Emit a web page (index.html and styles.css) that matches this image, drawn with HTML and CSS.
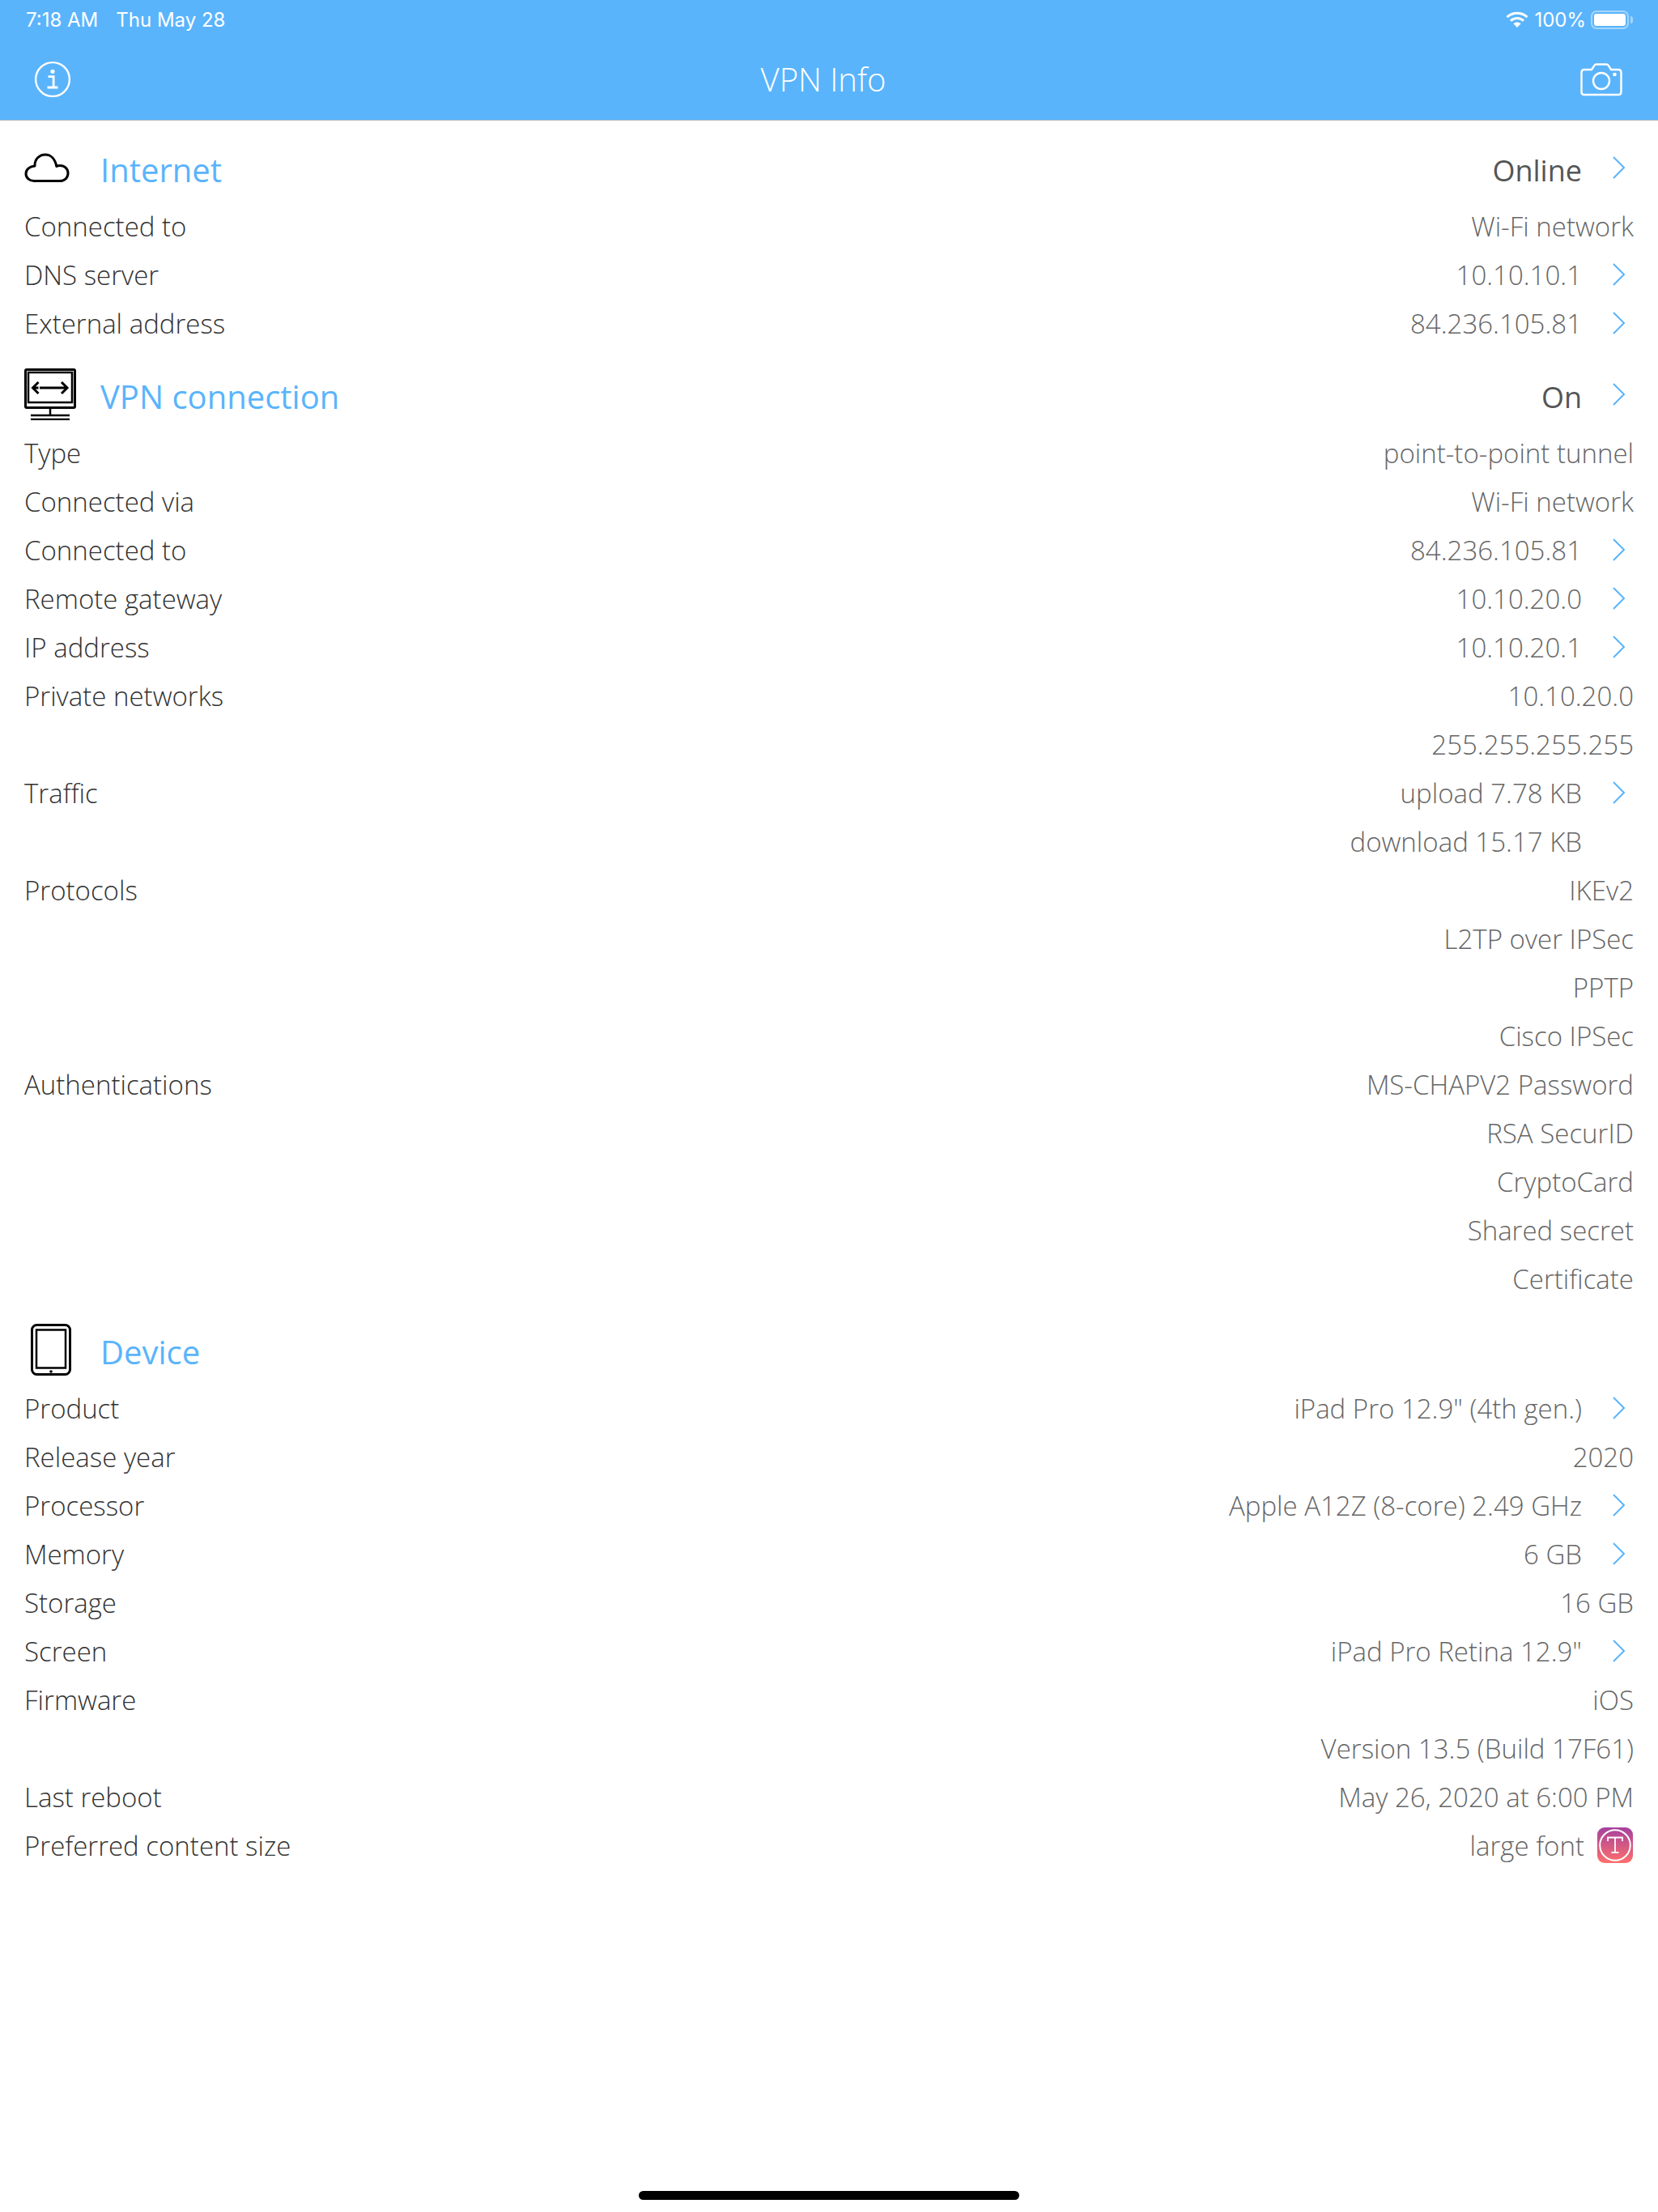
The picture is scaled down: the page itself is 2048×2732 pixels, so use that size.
FILE: index.html
```html
<!DOCTYPE html>
<html lang="en">
<head>
<meta charset="utf-8">
<title>VPN Info</title>
<link rel="stylesheet" href="styles.css">
</head>
<body>
<header class="top">
  <div class="status">
    <div class="status-left"><span>7:18 AM</span><span>Thu May 28</span></div>
    <div class="status-right">
      <svg class="wifi" viewBox="0 0 28 20" width="28" height="20"><path d="M1.5 7.2C8.6 .6 19.4 .6 26.5 7.2" fill="none" stroke="#fff" stroke-width="3"/><path d="M6 11.6C10.6 7.4 17.4 7.4 22 11.6" fill="none" stroke="#fff" stroke-width="3"/><path d="M14 20l-4.6-4.8c2.6-2.2 6.6-2.2 9.2 0z" fill="#fff"/></svg>
      <span class="pct">100%</span>
      <span class="battery"><span class="battery-fill"></span></span>
      <span class="battery-tip"></span>
    </div>
  </div>
  <div class="nav">
    <svg class="nav-icon" viewBox="0 0 46 46" width="46" height="46"><circle cx="23" cy="23" r="20.9" fill="none" stroke="#fff" stroke-width="2.4"/><circle cx="23" cy="13.3" r="2.6" fill="#fff"/><path d="M17.5 19.6h6.6v13M16.5 33h13" fill="none" stroke="#fff" stroke-width="2.8"/></svg>
    <div class="nav-title">VPN Info</div>
    <svg class="nav-icon" viewBox="0 0 52 42" width="52" height="42"><path d="M5 9h9l3.4-5.2c.5-.8 1.200-1.300 2.200-1.300h13c1 0 1.700.5 2.200 1.300L38 9h9c2 0 3.500 1.500 3.500 3.500v24c0 2-1.500 3.500-3.500 3.500H5c-2 0-3.500-1.500-3.500-3.500v-24C1.500 10.500 3 9 5 9z" fill="none" stroke="#fff" stroke-width="2.4"/><circle cx="26" cy="23" r="10" fill="none" stroke="#fff" stroke-width="2.4"/><circle cx="42.500" cy="15" r="2.300" fill="#fff"/></svg>
  </div>
</header>

<main class="content">
  <section>
    <div class="head">
      <span class="head-icon"><svg viewBox="0 0 56 36" width="56" height="36"><path d="M12 34.500h32c5.800 0 10-4 10-9.500s-4.200-9.500-10-9.500c-1.600 0-3 .3-4.200 .9C38 7.500 32.800 2 26 2c-7.600 0-13 5.800-13 13v1C6.800 16.500 2 20.200 2 25.500c0 5.200 4.300 9 10 9z" fill="none" stroke="#000" stroke-width="3" stroke-linejoin="round"/></svg></span>
      <h2 class="head-title">Internet</h2>
      <span class="head-value">Online</span>
      <span class="slot"><svg class="chev" viewBox="0 0 16 28" width="16" height="28"><path d="M1 1l13 13L1 27" fill="none" stroke="#5ab4fb" stroke-width="2"/></svg></span>
    </div>
    <div class="row"><span class="label">Connected to</span><span class="value">Wi-Fi network</span></div>
    <div class="row"><span class="label">DNS server</span><span class="value">10.10.10.1</span><span class="slot"><svg class="chev" viewBox="0 0 16 28" width="16" height="28"><path d="M1 1l13 13L1 27" fill="none" stroke="#5ab4fb" stroke-width="2"/></svg></span></div>
    <div class="row"><span class="label">External address</span><span class="value">84.236.105.81</span><span class="slot"><svg class="chev" viewBox="0 0 16 28" width="16" height="28"><path d="M1 1l13 13L1 27" fill="none" stroke="#5ab4fb" stroke-width="2"/></svg></span></div>
  </section>

  <section>
    <div class="head">
      <span class="head-icon"><svg viewBox="0 0 64 64" width="64" height="64"><rect x="1.500" y="1.500" width="61" height="47" rx="1.500" fill="none" stroke="#000" stroke-width="3"/><rect x="5" y="5" width="54" height="37" fill="none" stroke="#000" stroke-width="2.500"/><path d="M19 24H36M11.500 24h6M17.500 17l-7 7 7 7M24 24h-5M28 24H52M46 17l7 7-7 7" fill="none" stroke="#000" stroke-width="3"/><path d="M32 49v9" fill="none" stroke="#000" stroke-width="2.500"/><path d="M8 58h48M8 63h48" fill="none" stroke="#000" stroke-width="2.500"/></svg></span>
      <h2 class="head-title">VPN connection</h2>
      <span class="head-value">On</span>
      <span class="slot"><svg class="chev" viewBox="0 0 16 28" width="16" height="28"><path d="M1 1l13 13L1 27" fill="none" stroke="#5ab4fb" stroke-width="2"/></svg></span>
    </div>
    <div class="row"><span class="label">Type</span><span class="value">point-to-point tunnel</span></div>
    <div class="row"><span class="label">Connected via</span><span class="value">Wi-Fi network</span></div>
    <div class="row"><span class="label">Connected to</span><span class="value">84.236.105.81</span><span class="slot"><svg class="chev" viewBox="0 0 16 28" width="16" height="28"><path d="M1 1l13 13L1 27" fill="none" stroke="#5ab4fb" stroke-width="2"/></svg></span></div>
    <div class="row"><span class="label">Remote gateway</span><span class="value">10.10.20.0</span><span class="slot"><svg class="chev" viewBox="0 0 16 28" width="16" height="28"><path d="M1 1l13 13L1 27" fill="none" stroke="#5ab4fb" stroke-width="2"/></svg></span></div>
    <div class="row"><span class="label">IP address</span><span class="value">10.10.20.1</span><span class="slot"><svg class="chev" viewBox="0 0 16 28" width="16" height="28"><path d="M1 1l13 13L1 27" fill="none" stroke="#5ab4fb" stroke-width="2"/></svg></span></div>
    <div class="row"><span class="label">Private networks</span><span class="value">10.10.20.0</span></div>
    <div class="row"><span class="label"></span><span class="value">255.255.255.255</span></div>
    <div class="row"><span class="label">Traffic</span><span class="value">upload 7.78 KB</span><span class="slot"><svg class="chev" viewBox="0 0 16 28" width="16" height="28"><path d="M1 1l13 13L1 27" fill="none" stroke="#5ab4fb" stroke-width="2"/></svg></span></div>
    <div class="row"><span class="label"></span><span class="value">download 15.17 KB</span><span class="slot"></span></div>
    <div class="row"><span class="label">Protocols</span><span class="value">IKEv2</span></div>
    <div class="row"><span class="label"></span><span class="value">L2TP over IPSec</span></div>
    <div class="row"><span class="label"></span><span class="value">PPTP</span></div>
    <div class="row"><span class="label"></span><span class="value">Cisco IPSec</span></div>
    <div class="row"><span class="label">Authentications</span><span class="value">MS-CHAPV2 Password</span></div>
    <div class="row"><span class="label"></span><span class="value">RSA SecurID</span></div>
    <div class="row"><span class="label"></span><span class="value">CryptoCard</span></div>
    <div class="row"><span class="label"></span><span class="value">Shared secret</span></div>
    <div class="row"><span class="label"></span><span class="value">Certificate</span></div>
  </section>

  <section>
    <div class="head">
      <span class="head-icon"><svg class="device" viewBox="0 0 50 64" width="50" height="64"><rect x="1.500" y="1.500" width="47" height="61" rx="6" fill="none" stroke="#000" stroke-width="3"/><rect x="7" y="7.500" width="36" height="47" fill="none" stroke="#000" stroke-width="2.500"/><circle cx="25" cy="59" r="1.800" fill="#000"/></svg></span>
      <h2 class="head-title">Device</h2>
    </div>
    <div class="row"><span class="label">Product</span><span class="value">iPad Pro 12.9" (4th gen.)</span><span class="slot"><svg class="chev" viewBox="0 0 16 28" width="16" height="28"><path d="M1 1l13 13L1 27" fill="none" stroke="#5ab4fb" stroke-width="2"/></svg></span></div>
    <div class="row"><span class="label">Release year</span><span class="value">2020</span></div>
    <div class="row"><span class="label">Processor</span><span class="value">Apple A12Z (8-core) 2.49 GHz</span><span class="slot"><svg class="chev" viewBox="0 0 16 28" width="16" height="28"><path d="M1 1l13 13L1 27" fill="none" stroke="#5ab4fb" stroke-width="2"/></svg></span></div>
    <div class="row"><span class="label">Memory</span><span class="value">6 GB</span><span class="slot"><svg class="chev" viewBox="0 0 16 28" width="16" height="28"><path d="M1 1l13 13L1 27" fill="none" stroke="#5ab4fb" stroke-width="2"/></svg></span></div>
    <div class="row"><span class="label">Storage</span><span class="value">16 GB</span></div>
    <div class="row"><span class="label">Screen</span><span class="value">iPad Pro Retina 12.9"</span><span class="slot"><svg class="chev" viewBox="0 0 16 28" width="16" height="28"><path d="M1 1l13 13L1 27" fill="none" stroke="#5ab4fb" stroke-width="2"/></svg></span></div>
    <div class="row"><span class="label">Firmware</span><span class="value">iOS</span></div>
    <div class="row"><span class="label"></span><span class="value">Version 13.5 (Build 17F61)</span></div>
    <div class="row"><span class="label">Last reboot</span><span class="value">May 26, 2020 at 6:00 PM</span></div>
    <div class="row"><span class="label">Preferred content size</span><span class="value">large font</span><span class="badge-slot"><svg viewBox="0 0 44 44" width="44" height="44"><defs><linearGradient id="tg" x1="0" y1="0" x2="0" y2="1"><stop offset="0" stop-color="#a5419f"/><stop offset="1" stop-color="#ff6f6b"/></linearGradient></defs><rect width="44" height="44" rx="9" fill="url(#tg)"/><circle cx="22" cy="22" r="18.800" fill="none" stroke="#fff" stroke-width="2"/><path d="M13 17v-4.500h18V17M22 12.500V31M17.500 31h9" fill="none" stroke="#fff" stroke-width="1.800"/></svg></span></div>
  </section>
</main>

<div class="home-bar"></div>
</body>
</html>
```
FILE: styles.css
```css
* { box-sizing: border-box; }
html, body { margin: 0; padding: 0; }
body {
  width: 2048px;
  height: 2732px;
  background: #fff;
  display: flex;
  flex-direction: column;
  font-family: "Open Sans", "Liberation Sans", sans-serif;
  font-weight: 300;
  overflow: hidden;
}
.top {
  height: 149px;
  background: #5ab4fb;
  border-bottom: 1px solid #b9b9b9;
  color: #fff;
  flex: none;
}
.status {
  height: 48px;
  padding: 0 31px 0 32px;
  display: flex;
  justify-content: space-between;
  align-items: center;
  font-family: Inter, "Liberation Sans", sans-serif;
  font-weight: 400;
  font-size: 24px;
}
.status-left { display: flex; gap: 22px; }
.status-right { display: flex; align-items: center; }
.wifi { margin-right: 7px; }
.pct { margin-right: 6px; }
.battery {
  width: 47px;
  height: 23px;
  border: 2px solid rgba(255,255,255,.45);
  border-radius: 7px;
  padding: 2px;
  display: block;
}
.battery-fill { display: block; height: 100%; background: #fff; border-radius: 3px; }
.battery-tip {
  width: 3px;
  height: 9px;
  margin-left: 2px;
  background: rgba(255,255,255,.45);
  border-radius: 0 3px 3px 0;
}
.nav {
  height: 100px;
  padding: 0 44px 0 42px;
  display: flex;
  align-items: center;
  justify-content: space-between;
  position: relative;
}
.nav-icon { flex: none; }
.nav-title {
  font-size: 40px;
  line-height: 100px;
  flex: 1;
  text-align: center;
  padding-right: 6px;
}
.head {
  height: 100px;
  padding: 16px 30px 0;
  display: flex;
  align-items: center;
}
.head-icon {
  width: 94px;
  flex: none;
  display: flex;
  align-items: center;
}
.device { margin-left: 8px; }
.head-title {
  margin: 0;
  flex: 1;
  font-size: 40px;
  font-weight: 400;
  line-height: 56px;
  color: #5ab4fb;
  position: relative;
  top: 3px;
}
.head-value {
  font-size: 36px;
  font-weight: 400;
  color: #555;
  position: relative;
  top: 3px;
}
.row {
  height: 60px;
  padding: 0 30px;
  display: flex;
  align-items: center;
  font-size: 33px;
}
.label { flex: 1; color: #333; }
.value { color: #666; white-space: nowrap; }
.slot {
  width: 64px;
  flex: none;
  display: flex;
  justify-content: flex-end;
  padding-right: 10px;
}
.badge-slot {
  width: 60px;
  flex: none;
  display: flex;
  justify-content: flex-end;
  margin-right: 1px;
}
.chev { display: block; }
.home-bar {
  width: 470px;
  height: 11px;
  border-radius: 6px;
  background: #000;
  margin: auto auto 15px;
  flex: none;
}
```
